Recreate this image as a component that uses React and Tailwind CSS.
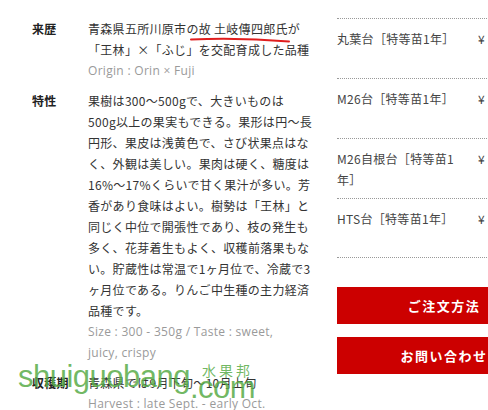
const font = { fontFamily: '"Noto Sans CJK JP", "Noto Sans", sans-serif' };
const enFont = { fontFamily: '"Open Sans", "Noto Sans CJK JP", sans-serif' };

const specs = [
  {
    label: "来歴",
    lines: ["青森県五所川原市の故 土岐傳四郎氏が", "「王林」×「ふじ」を交配育成した品種"],
    en: ["Origin : Orin × Fuji"],
  },
  {
    label: "特性",
    lines: [
      "果樹は300～500gで、大きいものは",
      "500g以上の果実もできる。果形は円～長",
      "円形、果皮は浅黄色で、さび状果点はな",
      "く、外観は美しい。果肉は硬く、糖度は",
      "16%～17%くらいで甘く果汁が多い。芳",
      "香があり食味はよい。樹勢は「王林」と",
      "同じく中位で開張性であり、枝の発生も",
      "多く、花芽着生もよく、収穫前落果もな",
      "い。貯蔵性は常温で1ヶ月位で、冷蔵で3",
      "ヶ月位である。りんご中生種の主力経済",
      "品種です。",
    ],
    en: ["Size : 300 - 350g / Taste : sweet,", "juicy, crispy"],
  },
  {
    label: "収穫期",
    lines: ["青森県では9月下旬～10月上旬"],
    en: ["Harvest : late Sept. - early Oct."],
  },
];

const stocks = [
  { name: ["丸葉台［特等苗1年］"] },
  { name: ["M26台［特等苗1年］"] },
  { name: ["M26自根台［特等苗1", "年］"] },
  { name: ["HTS台［特等苗1年］"] },
];

function SpecRow({ label, lines, en }) {
  return (
    <div className="flex mb-[9px]">
      <div className="w-[56px] shrink-0 font-bold text-[#222]">{label}</div>
      <div className="w-[226px] shrink-0">
        {lines.map((l, i) => (
          <span key={i} className="block whitespace-nowrap text-[#333]">
            {l}
          </span>
        ))}
        {en.map((l, i) => (
          <span
            key={i}
            className="block whitespace-nowrap text-[#9a9a9a]"
            style={enFont}
          >
            {l}
          </span>
        ))}
      </div>
    </div>
  );
}

export default function App() {
  return (
    <div
      className="relative w-[488px] h-[410px] overflow-hidden bg-white text-[12px] leading-[21px] tracking-[0.3px]"
      style={font}
    >
      <div className="flex pt-[18px]">
        {/* spec table */}
        <div className="w-[337px] shrink-0 pl-[32px]">
          {specs.map((s) => (
            <SpecRow key={s.label} {...s} />
          ))}
        </div>

        {/* stock list + buttons */}
        <div className="w-[214px] shrink-0">
          {stocks.map((s, i) => (
            <div
              key={i}
              className={`flex h-[60px] pt-[9px] border-t border-dotted border-[#999] ${
                i === stocks.length - 1 ? "border-b" : ""
              }`}
            >
              <div className="w-[141px] shrink-0 text-[#444]">
                {s.name.map((n, j) => (
                  <span key={j} className="block whitespace-nowrap">
                    {n}
                  </span>
                ))}
              </div>
              <div className="text-[#444]">¥</div>
            </div>
          ))}

          <div className="mt-[29px] flex flex-col gap-[13px]">
            <button className="h-[37px] w-[214px] bg-[#cc0000] text-white font-bold text-[13px] tracking-[1.5px]">
              ご注文方法
            </button>
            <button className="h-[37px] w-[214px] bg-[#cc0000] text-white font-bold text-[13px] tracking-[1.5px]">
              お問い合わせ
            </button>
          </div>
        </div>
      </div>

      {/* hand-drawn underline */}
      <svg
        className="absolute left-0 top-0 pointer-events-none"
        width="488"
        height="60"
      >
        <path
          d="M191 39.5 Q 240 37.5 289 41.5"
          stroke="#e01e1e"
          strokeWidth="2"
          fill="none"
          strokeLinecap="round"
        />
      </svg>

      {/* watermark */}
      <div
        className="absolute left-[18px] top-[361px] text-[31px] leading-[31px] tracking-[-0.5px] text-[rgba(88,172,72,0.85)] whitespace-nowrap pointer-events-none"
        style={{ fontFamily: '"Liberation Sans", Arial, sans-serif' }}
      >
        shuiguobang
      </div>
      <div
        className="absolute left-[190px] top-[372px] text-[31px] leading-[31px] tracking-[-0.5px] text-[rgba(88,172,72,0.85)] whitespace-nowrap pointer-events-none"
        style={{ fontFamily: '"Liberation Sans", Arial, sans-serif' }}
      >
        .com
      </div>
      <div className="absolute left-[202px] top-[362px] text-[14px] leading-[16px] tracking-[3px] text-[rgba(88,172,72,0.85)] whitespace-nowrap pointer-events-none">
        水果邦
      </div>
    </div>
  );
}
